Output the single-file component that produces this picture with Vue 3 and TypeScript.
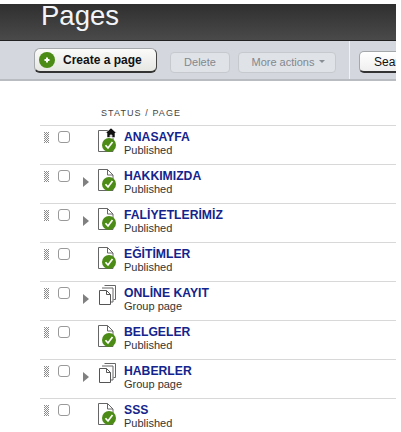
<script setup lang="ts">
type PageRow = { title: string; kind: 'page' | 'group'; expandable: boolean; home?: boolean };

const rows: PageRow[] = [
  { title: 'ANASAYFA', kind: 'page', expandable: false, home: true },
  { title: 'HAKKIMIZDA', kind: 'page', expandable: true },
  { title: 'FALİYETLERİMİZ', kind: 'page', expandable: true },
  { title: 'EĞİTİMLER', kind: 'page', expandable: false },
  { title: 'ONLİNE KAYIT', kind: 'group', expandable: true },
  { title: 'BELGELER', kind: 'page', expandable: false },
  { title: 'HABERLER', kind: 'group', expandable: true },
  { title: 'SSS', kind: 'page', expandable: false },
];
</script>

<template>
  <div class="screen">
    <header class="head">
      <h1>Pages</h1>
    </header>

    <div class="toolbar">
      <button class="btn create" type="button">
        <svg class="plus" width="16" height="16" viewBox="0 0 16 16">
          <circle cx="8" cy="8" r="8" fill="#4c8c16" />
          <path d="M8 5.500v5M5.500 8h5" stroke="#fff" stroke-width="2" />
        </svg>
        Create a page
      </button>
      <button class="btn off delete" type="button">Delete</button>
      <button class="btn off more" type="button">
        More actions
        <svg width="6" height="3" viewBox="0 0 6 3"><path d="M0 0h6L3 3z" fill="#888e96" /></svg>
      </button>
      <div class="divider"></div>
      <button class="btn search" type="button">Search</button>
    </div>

    <div class="list">
      <div class="list-head">STATUS / PAGE</div>
      <div v-for="row in rows" :key="row.title" class="row">
        <svg class="grip" width="5" height="11" viewBox="0 0 5 11">
          <path
            d="M0 .5h5M1 1.500h4M0 2.500h5M1 3.500h4M0 4.500h5M1 5.500h4M0 6.500h5M1 7.500h4M0 8.500h5M1 9.500h4M0 10.500h5"
            stroke="#8a8a8a"
            stroke-width="1"
            stroke-dasharray="1 1"
          />
        </svg>
        <span class="check"></span>
        <span class="arrow-slot">
          <span v-if="row.expandable" class="arrow"></span>
        </span>
        <span class="icon">
          <svg v-if="row.kind === 'page'" width="22" height="26" viewBox="0 0 22 26">
            <path d="M.5 3.500h9l5.500 5.500v15.500h-14.500z" fill="#fff" stroke="#666" />
            <path d="M9.500 3.500v5.500h5.500" fill="none" stroke="#666" />
            <circle cx="11" cy="18" r="7" fill="#4c8c16" />
            <path d="M7.500 18.200l2.500 2.800 4.500-6" fill="none" stroke="#fff" stroke-width="1.700" />
            <path
              v-if="row.home"
              d="M13 1l5.500 5h-1.500v4.500h-3v-2.500h-2v2.500h-3v-4.500h-1.500z"
              fill="#111"
              stroke="#fff"
              stroke-width=".6"
            />
          </svg>
          <svg v-else width="22" height="26" viewBox="0 0 22 26">
            <path d="M6.500 2.500h11v14h-2" fill="#fff" stroke="#666" />
            <path d="M4 5h11v14h-2" fill="#fff" stroke="#666" />
            <path d="M1.500 7.500h7l4 4v10h-11z" fill="#fff" stroke="#555" />
            <path d="M8.500 7.500v4h4" fill="none" stroke="#555" />
          </svg>
        </span>
        <div class="text">
          <a class="title">{{ row.title }}</a>
          <span class="status">{{ row.kind === 'page' ? 'Published' : 'Group page' }}</span>
        </div>
      </div>
    </div>
  </div>
</template>

<style>
html,
body {
  background: #fff;
  overflow: hidden;
}
</style>

<style scoped>
.screen {
  width: 396px;
  height: 432px;
  padding-top: 4px;
  box-sizing: border-box;
  overflow: hidden;
  font-family: "Liberation Sans", Arial, sans-serif;
}
.head {
  display: flow-root;
  height: 37px;
  background: linear-gradient(#2f2f2f, #4a4a4a);
  border-bottom: 1px solid #222;
  box-sizing: border-box;
  padding-left: 41px;
}
h1 {
  margin: -2px 0 0;
  font-size: 27.500px;
  line-height: 27px;
  font-weight: 400;
  color: #f2f4f7;
}
.toolbar {
  height: 40px;
  background: #d4d8de;
  border-bottom: 2px solid #b9bcc0;
  box-sizing: border-box;
  display: flex;
  align-items: flex-end;
  padding: 0 0 6px 34px;
  overflow: hidden;
}
.btn {
  flex: none;
  font-family: inherit;
  box-sizing: border-box;
  padding: 0;
  display: flex;
  align-items: center;
  justify-content: center;
}
.create {
  width: 123px;
  height: 25px;
  gap: 8px;
  justify-content: flex-start;
  padding-left: 4px;
  font-size: 12px;
  font-weight: 700;
  color: #111;
  background: linear-gradient(#fbfbfa, #e6e6e3);
  border: 1px solid #a5a8aa;
  border-right-color: #444;
  border-bottom: 2px solid #333;
  border-radius: 6px;
}
.off {
  height: 21px;
  padding-bottom: 2px;
  font-size: 11px;
  color: #83888f;
  background: #dfe2e6;
  border: 1px solid #c6cace;
  border-radius: 4px;
}
.delete {
  width: 60px;
  margin-left: 13px;
}
.more {
  width: 98px;
  margin-left: 8px;
  gap: 5px;
  padding-left: 3px;
}
.divider {
  flex: none;
  align-self: stretch;
  width: 1px;
  margin: 0 0 -6px 13px;
  background: #f1f2f4;
}
.search {
  width: 68px;
  height: 22px;
  margin-left: 9px;
  font-size: 12px;
  color: #111;
  background: linear-gradient(#fff, #efefef);
  border: 1px solid #a5a8aa;
  border-bottom: 2px solid #333;
  border-radius: 5px;
}
.list {
  margin-left: 40px;
}
.list-head {
  height: 44px;
  box-sizing: border-box;
  padding: 26px 0 0 61px;
  font-size: 9px;
  line-height: 12px;
  letter-spacing: 1.080px;
  color: #444;
}
.row {
  height: 39px;
  box-sizing: border-box;
  border-top: 1px solid #d8d8d8;
  display: flex;
  align-items: flex-start;
}
.grip {
  flex: none;
  margin: 6px 0 0 4px;
}
.check {
  flex: none;
  width: 12px;
  height: 12px;
  margin: 5px 0 0 9px;
  box-sizing: border-box;
  border: 1px solid #999;
  border-radius: 3px;
  background: #fff;
}
.arrow-slot {
  flex: none;
  width: 13px;
  margin-left: 13px;
}
.arrow {
  display: block;
  width: 0;
  height: 0;
  margin-top: 12px;
  border-left: 6px solid #808080;
  border-top: 5.500px solid transparent;
  border-bottom: 5.500px solid transparent;
}
.icon {
  flex: none;
  width: 22px;
  height: 26px;
  margin: 1px 0 0 2px;
}
.text {
  margin-left: 4px;
  padding-top: 4px;
  display: flex;
  flex-direction: column;
}
.title {
  font-size: 12.200px;
  line-height: 14px;
  font-weight: 700;
  color: #14248c;
}
.status {
  font-size: 11px;
  line-height: 13px;
  color: #333;
}
</style>
